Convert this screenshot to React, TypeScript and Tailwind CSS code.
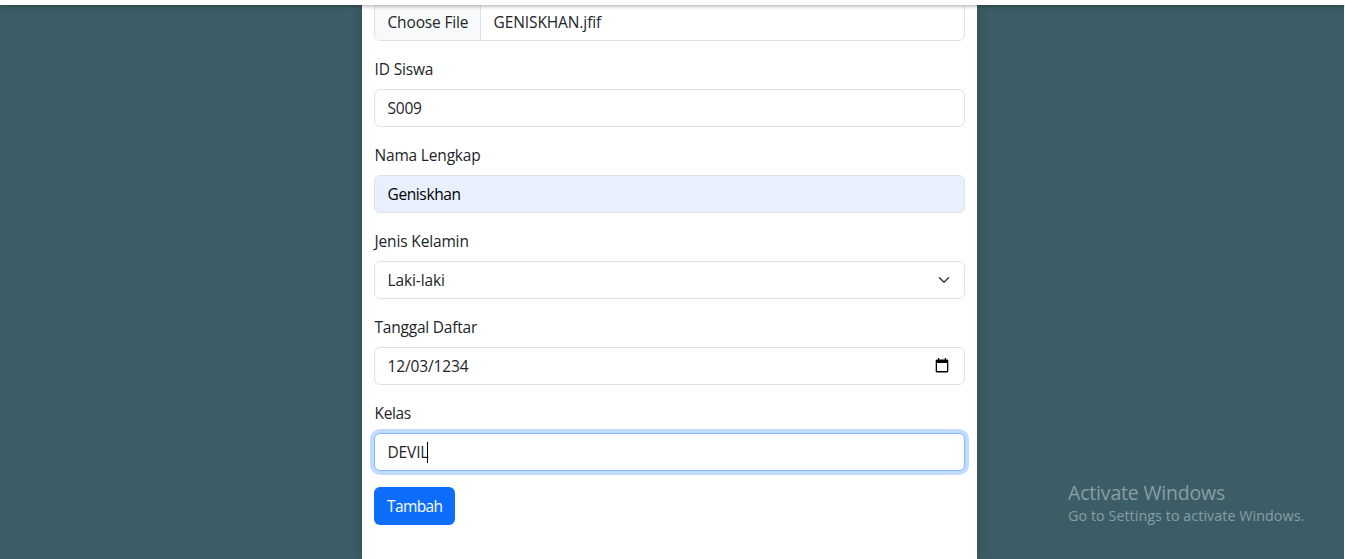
import type { ReactNode } from "react";

const box = "flex h-[38px] items-center rounded-md border border-[#dee2e6] bg-white pl-[12.5px] pr-3";

function Field({ label, tracking, children }: { label: string; tracking: string; children: ReactNode }) {
  return (
    <div className="mb-4 flex flex-col">
      <span className={`mb-2 block h-6 pl-[0.5px] leading-6 whitespace-nowrap ${tracking}`}>{label}</span>
      {children}
    </div>
  );
}

function Chevron() {
  return (
    <svg className="ml-auto h-3 w-4" viewBox="0 0 16 16" fill="none" stroke="#343a40" strokeWidth="2" strokeLinecap="round" strokeLinejoin="round">
      <path d="m2 5 6 6 6-6" />
    </svg>
  );
}

function Calendar() {
  return (
    <svg className="mr-[3px] mb-px ml-auto h-[15px] w-[14px]" viewBox="0 0 14 15" fill="#000">
      <path d="M1.5 1.5H3V0h1.3v1.5h5.4V0H11v1.5h1.5l.8.7v11.5l-.8.7h-11l-.8-.7V2.2zM2 5v8.1h10V5z" fillRule="evenodd" />
    </svg>
  );
}

export default function App() {
  return (
    <div className="flex h-[559px] w-[1345px] flex-col overflow-hidden bg-white font-['Open_Sans','Noto_Sans',sans-serif] text-[15.5px] leading-6 text-[#212529]">
      <header className="z-10 h-[5px] shrink-0 bg-white shadow-[0_1px_4px_rgba(0,0,0,0.35)]" />
      <div className="mr-px flex min-h-0 flex-1 bg-[#3c5d66]">
        <main className="-mt-0.5 ml-[362px] h-[556px] w-[615px] shrink-0 bg-white px-3 shadow-[0_0_12px_rgba(0,0,0,0.22)]">
          <div className="mb-4 flex h-[38px] items-center overflow-hidden rounded-md border border-[#dee2e6]">
            <div className="flex h-full w-[106px] items-center border-r border-[#dee2e6] bg-[#f8f9fa] pl-[12.5px]">
              <span className="tracking-[-0.15px] whitespace-nowrap">Choose File</span>
            </div>
            <span className="ml-[12.5px] tracking-[-0.1px] whitespace-nowrap">GENISKHAN.jfif</span>
          </div>
          <Field label="ID Siswa" tracking="tracking-[-0.15px]">
            <div className={box}><span className="tracking-[-0.2px]">S009</span></div>
          </Field>
          <Field label="Nama Lengkap" tracking="tracking-[-0.18px]">
            <div className="flex h-[38px] items-center rounded-md border border-[#dee2e6] bg-[#e8f0fe] px-[12.5px] text-black"><span className="tracking-[-0.38px]">Geniskhan</span></div>
          </Field>
          <Field label="Jenis Kelamin" tracking="tracking-[-0.15px]">
            <div className={box}><span className="tracking-[-0.1px]">Laki-laki</span><Chevron /></div>
          </Field>
          <Field label="Tanggal Daftar" tracking="tracking-[-0.22px]">
            <div className={box}><span className="tracking-[-0.12px]">12/03/1234</span><Calendar /></div>
          </Field>
          <Field label="Kelas" tracking="tracking-[-0.35px]">
            <div className="flex h-[38px] items-center rounded-md border border-[#86b7fe] bg-white px-[12.5px] shadow-[0_0_0_4px_rgba(13,110,253,0.25)]">
              <span className="tracking-[-0.15px]">DEVIL</span>
              <i className="-ml-px h-[21px] w-px bg-black" />
            </div>
          </Field>
          <button className="flex h-[38px] w-[81px] items-center rounded-md bg-[#0d6efd] pl-[13px] text-white"><span className="tracking-[-0.6px]">Tambah</span></button>
        </main>
        <aside className="mt-[475px] ml-[91px] flex flex-col whitespace-nowrap text-[#879da4]">
          <span className="text-[19.5px] leading-[26px] tracking-[-0.18px]">Activate Windows</span>
          <span className="text-[14.3px] leading-5 tracking-[0.06px]">Go to Settings to activate Windows.</span>
        </aside>
      </div>
    </div>
  );
}
